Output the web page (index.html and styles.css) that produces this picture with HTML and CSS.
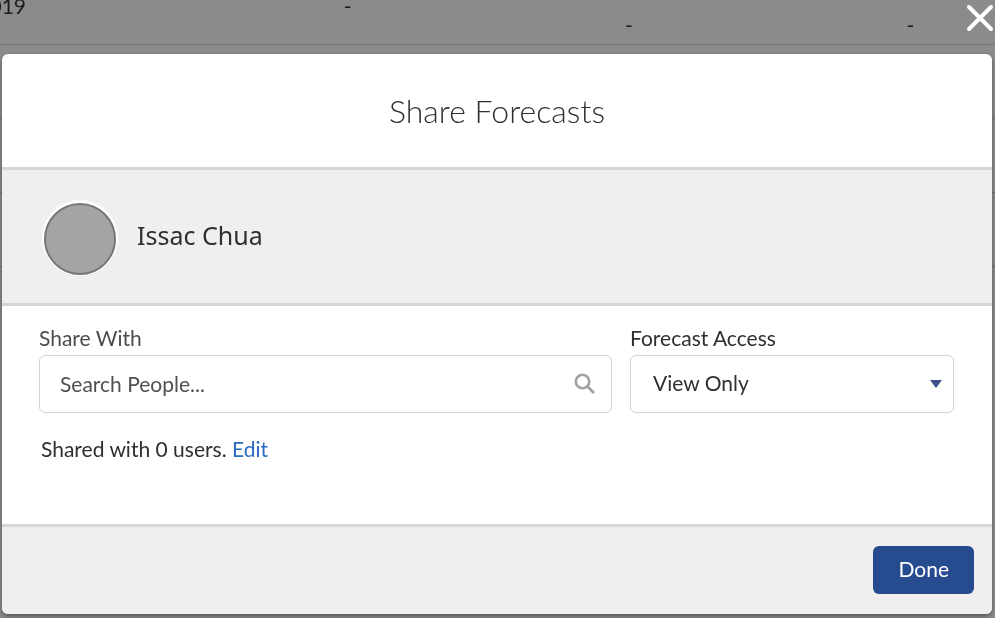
FILE: index.html
```html
<!DOCTYPE html>
<html lang="en">
<head>
    <meta charset="UTF-8">
    <meta name="viewport" content="width=device-width, initial-scale=1.0">
    <title>Share Forecasts</title>
    <link rel="stylesheet" href="styles.css">
</head>
<body>
    <!-- Forecast grid behind the dialog -->
    <div class="page">
        <table class="forecast-grid">
            <tr>
                <td class="period">2019</td>
                <td>-</td>
                <td class="low">-</td>
                <td class="low">-</td>
            </tr>
            <tr><td></td><td></td><td></td><td></td></tr>
            <tr><td></td><td></td><td></td><td></td></tr>
            <tr><td></td><td></td><td></td><td></td></tr>
        </table>
    </div>

    <div class="overlay">
        <button class="close" type="button" aria-label="Close">
            <svg width="28" height="28" viewBox="0 0 28 28">
                <path d="M3 3L25 25M25 3L3 25" fill="none" stroke="#fff" stroke-width="4" stroke-linecap="round"/>
            </svg>
        </button>

        <div class="dialog" role="dialog" aria-labelledby="dialogTitle">
            <header class="dialog-header">
                <h1 id="dialogTitle">Share Forecasts</h1>
            </header>

            <div class="person">
                <span class="avatar"></span>
                <h2>Issac Chua</h2>
            </div>

            <div class="dialog-body">
                <div class="fields">
                    <div class="field people">
                        <label for="searchPeople">Share With</label>
                        <div class="control">
                            <input type="text" id="searchPeople" placeholder="Search People...">
                            <svg class="search-icon" width="22" height="22" viewBox="0 0 22 22">
                                <circle cx="8.5" cy="8.5" r="6.7" fill="none" stroke="#a3a3a3" stroke-width="2.6"/>
                                <path d="M13.5 13.5L20 20" stroke="#a3a3a3" stroke-width="2.8"/>
                            </svg>
                        </div>
                    </div>
                    <div class="field access">
                        <label for="forecastAccess">Forecast Access</label>
                        <div class="control">
                            <select id="forecastAccess">
                                <option>View Only</option>
                                <option>View and Edit</option>
                            </select>
                            <svg class="arrow" width="12" height="8" viewBox="0 0 12 8">
                                <path d="M0 0H12L6 8Z" fill="#41508c"/>
                            </svg>
                        </div>
                    </div>
                </div>
                <p class="shared">Shared with 0 users. <a href="#">Edit</a></p>
            </div>

            <footer class="dialog-footer">
                <button class="done" type="button">Done</button>
            </footer>
        </div>
    </div>
</body>
</html>
```
FILE: styles.css
```css
* {
    box-sizing: border-box;
}
body {
    margin: 0;
    font-family: Lato, "Open Sans", sans-serif;
    font-size: 21px;
    line-height: 24px;
    color: #2f2f2f;
    background-color: #8b8b8b;
}
h1, h2, p {
    margin: 0;
}

/* Grid behind the dialog */
.page {
    position: fixed;
    top: 0;
    left: 0;
    width: 100%;
    height: 100%;
    overflow: hidden;
}
.forecast-grid {
    width: calc(100% + 274px);
    margin: -30px 0 0 -218px;
    border-collapse: collapse;
    table-layout: fixed;
}
.forecast-grid td {
    height: 74px;
    padding: 0 0 2px;
    border-bottom: 1px solid #727272;
    text-align: center;
    vertical-align: middle;
    color: #1c1c1c;
}
.forecast-grid td.period {
    width: 425px;
    padding-right: 181px;
    text-align: right;
}
.forecast-grid td.low {
    padding-top: 38px;
}

/* Dialog */
.overlay {
    position: relative;
    display: flex;
    min-height: 100vh;
    padding: 54px 3px 4px 2px;
}
.close {
    position: absolute;
    top: 4px;
    right: 1px;
    width: 28px;
    height: 28px;
    padding: 0;
    border: 0;
    background: none;
    cursor: pointer;
}
.close svg {
    display: block;
}
.dialog {
    display: flex;
    flex: 1;
    flex-direction: column;
    overflow: hidden;
    border-radius: 6px;
    background-color: #fff;
    box-shadow: 0 2px 4px rgba(0, 0, 0, 0.4);
}
.dialog-header {
    padding: 36px 20px;
    border-bottom: 3px solid #d7d5d6;
    text-align: center;
}
.dialog-header h1 {
    font-size: 32px;
    font-weight: 300;
    line-height: 41px;
}
.person {
    display: flex;
    align-items: center;
    gap: 21px;
    padding: 33px 42px 28px;
    border-bottom: 3px solid #d7d5d6;
    background-color: #f0eeef;
}
.avatar {
    width: 72px;
    height: 72px;
    border: 2px solid #777;
    border-radius: 50%;
    background-color: #a4a4a4;
    box-shadow: 0 -1px 0 2px #fff;
}
.person h2 {
    padding-bottom: 8px;
    font-family: "Noto Sans", sans-serif;
    font-size: 25px;
    font-weight: 400;
    line-height: 32px;
}
.dialog-body {
    flex: 1;
    padding: 20px 38px 20px 37px;
}
.fields {
    display: flex;
    gap: 18px;
}
.field label {
    display: block;
    margin-bottom: 5px;
}
.people {
    flex: 573;
}
.people label {
    color: #4c4c4c;
}
.access {
    flex: 324;
}
.control {
    position: relative;
}
.control input,
.control select {
    display: block;
    width: 100%;
    height: 58px;
    padding: 0 48px 2px 20px;
    border: 1px solid #d4d4d4;
    border-radius: 6px;
    background-color: #fff;
    font: inherit;
    color: inherit;
    appearance: none;
}
.control input::placeholder {
    color: #505050;
    opacity: 1;
}
.control select {
    padding-left: 22px;
}
.search-icon {
    position: absolute;
    top: 18px;
    right: 16px;
}
.arrow {
    position: absolute;
    top: 25px;
    right: 12px;
    pointer-events: none;
}
.shared {
    padding: 24px 2px 0;
}
.shared a {
    color: #2a6cc0;
    text-decoration: none;
}
.dialog-footer {
    display: flex;
    justify-content: flex-end;
    padding: 19px 18px 20px;
    border-top: 3px solid #d7d5d6;
    background-color: #f0eeef;
}
.done {
    padding: 11px 25px 13px;
    border: 0;
    border-radius: 6px;
    background-color: #274b8f;
    font: inherit;
    color: #fff;
    cursor: pointer;
}
```
